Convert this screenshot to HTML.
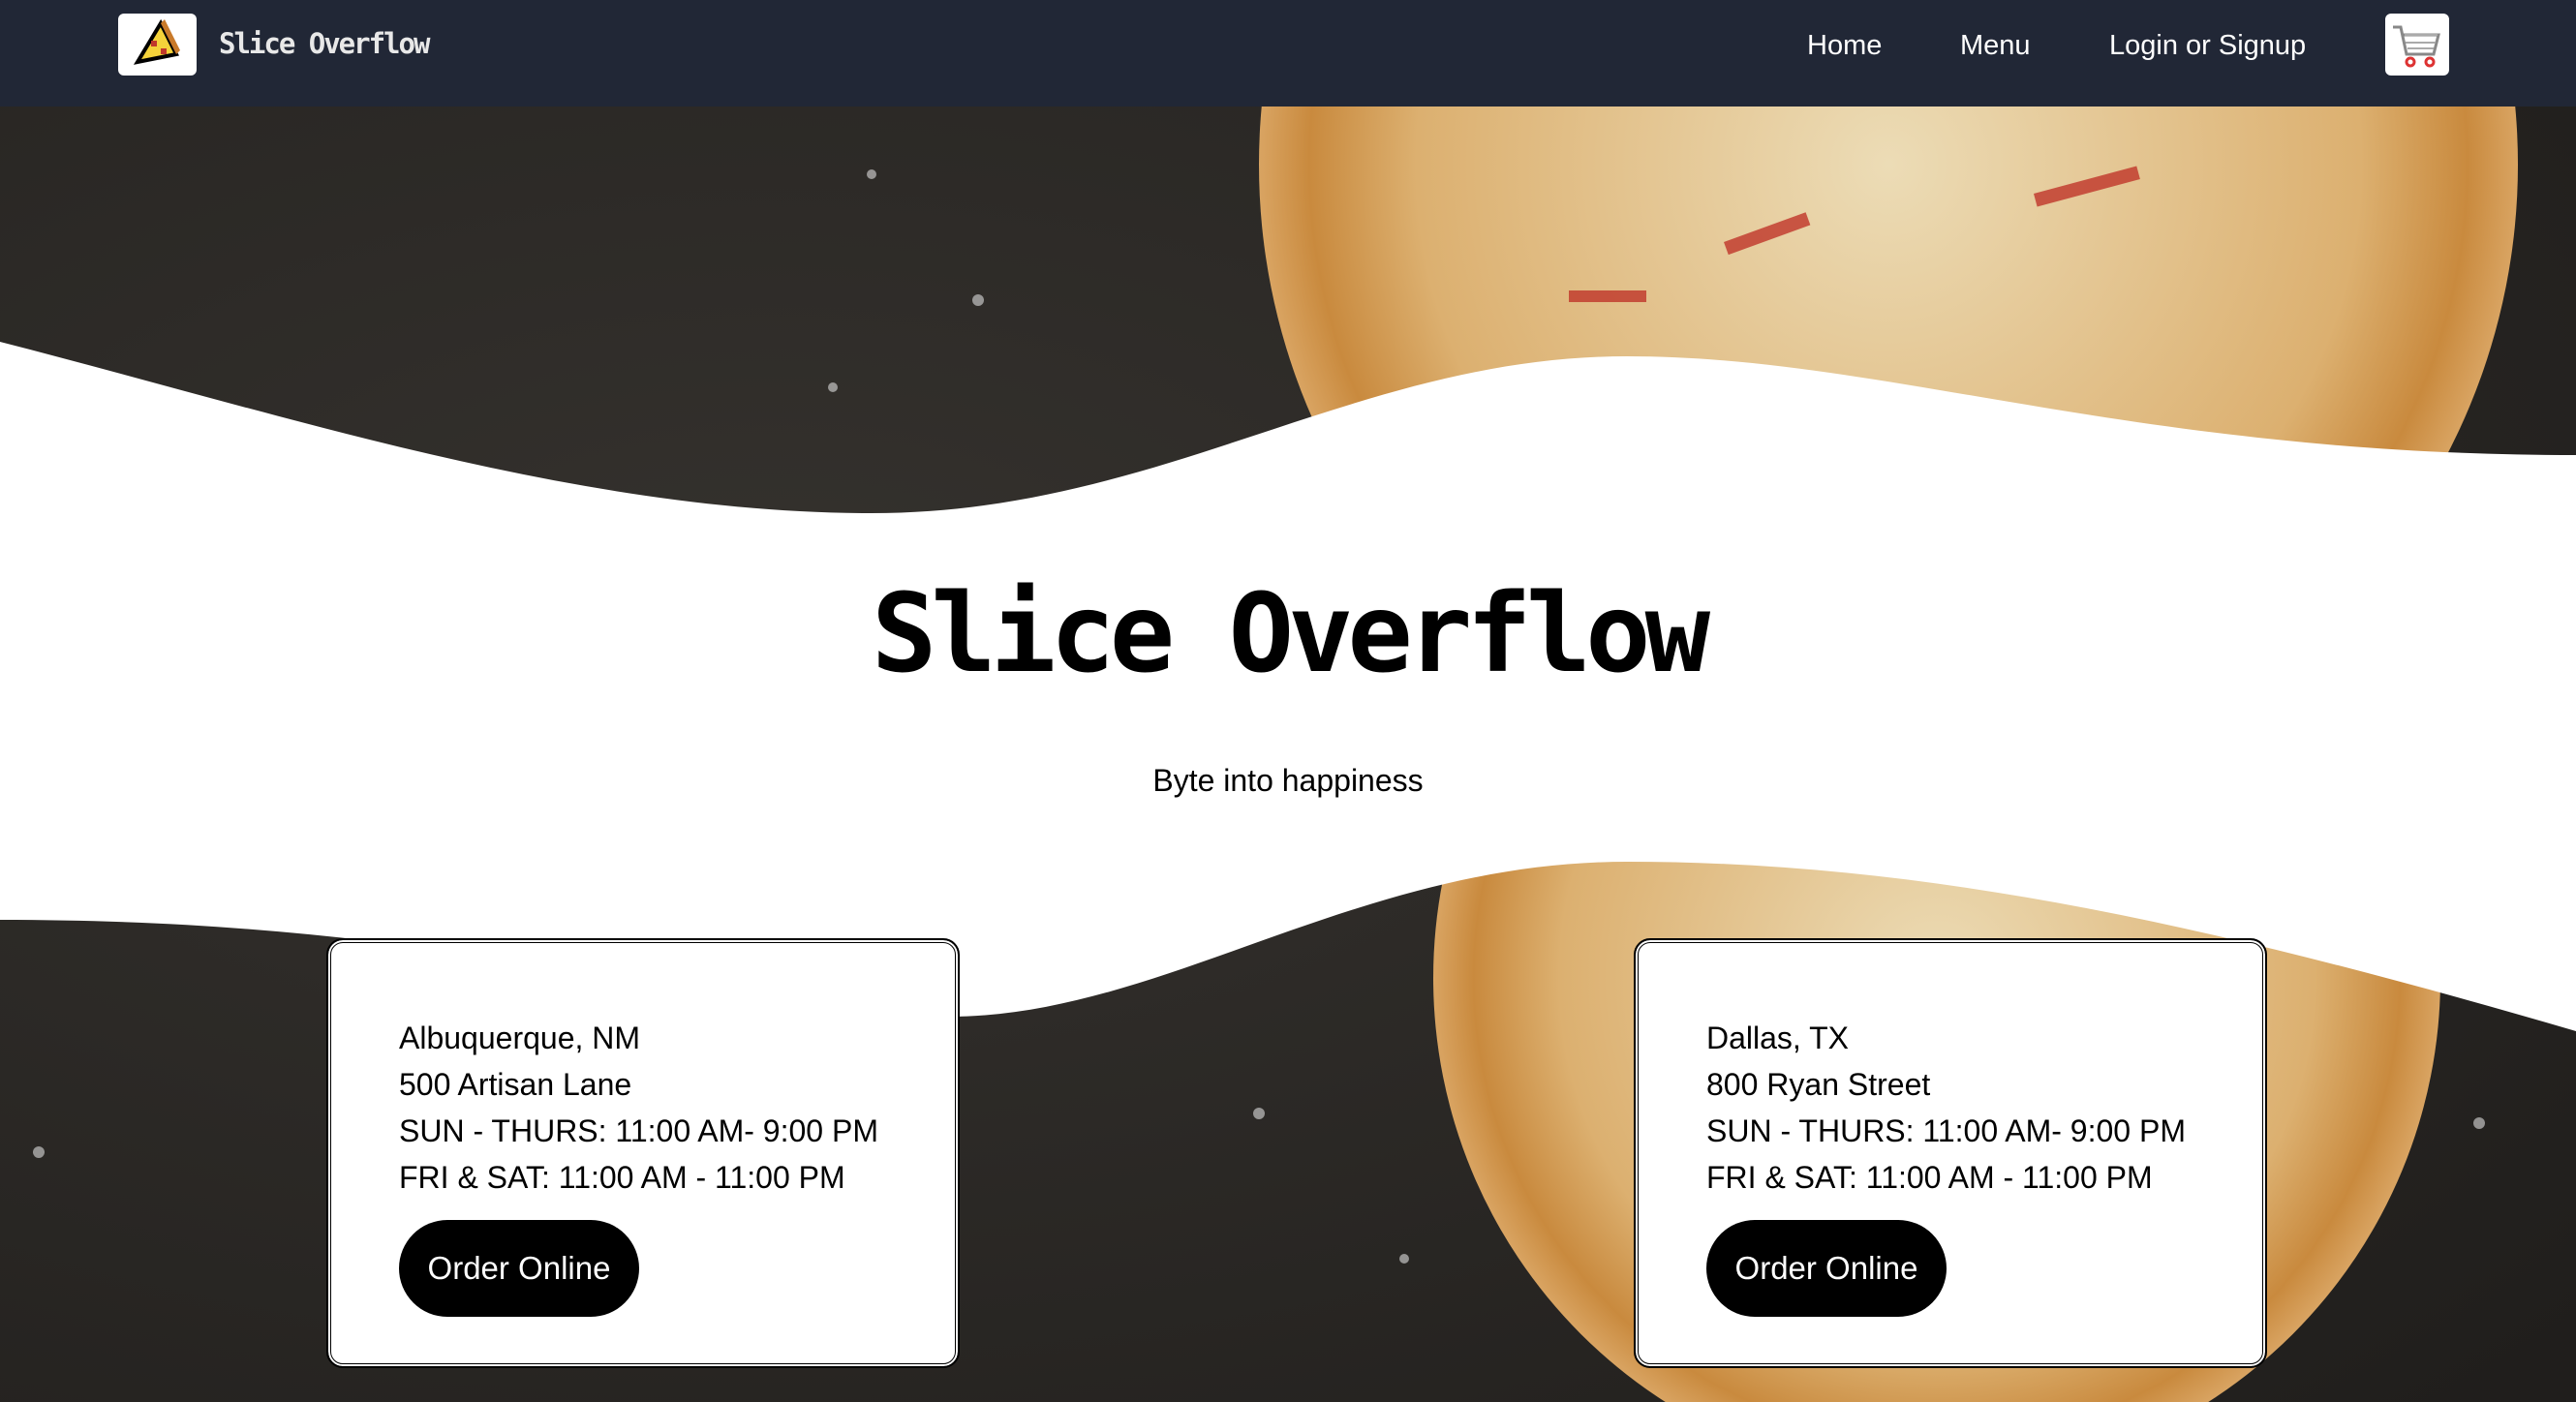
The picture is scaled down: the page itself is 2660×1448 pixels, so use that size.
<!DOCTYPE html>
<html><head><meta charset="utf-8"><style>
*{margin:0;padding:0;box-sizing:border-box}
html,body{overflow:hidden}
body{width:2660px;height:1448px;position:relative;font-family:"Liberation Sans",sans-serif;background:#fff}
nav{position:absolute;left:0;top:0;width:2660px;height:110px;background:#212736;z-index:5}
.logo{position:absolute;left:122px;top:14px;width:81px;height:64px;background:#fff;border-radius:6px}
.brand{position:absolute;left:226px;top:28px;color:#e8e8e8;font:bold 29px "DejaVu Sans Mono",monospace;letter-spacing:-2px}
.nl{position:absolute;top:31px;color:#fff;font-size:29px}
.cart{position:absolute;left:2463px;top:14px;width:66px;height:64px;background:#fff;border-radius:6px}
svg.bg{position:absolute;left:0;top:110px}
h1{position:absolute;left:0;width:2660px;top:590px;text-align:center;font:bold 112px "DejaVu Sans Mono",monospace;letter-spacing:-6px;line-height:130px}
.sub{position:absolute;left:0;width:2660px;top:788px;text-align:center;font-size:32px}
.card{position:absolute;top:970px;width:652px;height:442px;background:#fff;border:4px double #000;outline:2px solid #000;outline-offset:-1px;border-radius:16px;padding:74px 0 0 70px;font-size:32px;line-height:48px;overflow:hidden}
.btn{display:inline-block;margin-top:20px;background:#000;color:#fff;height:100px;width:248px;border-radius:50px;text-align:center;line-height:100px;font-size:33px}
</style></head><body>
<nav>
<div class="logo"><svg width="81" height="64" viewBox="0 0 81 64"><polygon points="20,50 44,10 60,42" fill="#f5d33a" stroke="#000" stroke-width="4"/><rect x="34" y="28" width="6" height="6" fill="#c0392b"/><rect x="44" y="36" width="6" height="6" fill="#c0392b"/><polygon points="44,10 60,42 64,38 48,6" fill="#c97a2a"/></svg></div>
<div class="brand">Slice Overflow</div>
<div class="nl" style="left:1866px">Home</div>
<div class="nl" style="left:2024px">Menu</div>
<div class="nl" style="left:2178px">Login or Signup</div>
<div class="cart"><svg width="66" height="64" viewBox="0 0 66 64"><path d="M8 14h8l6 28h28l5-20H18" fill="none" stroke="#888" stroke-width="3"/><path d="M20 22h34M21 30h31M23 36h27" stroke="#aaa" stroke-width="2"/><circle cx="26" cy="50" r="4" fill="none" stroke="#d33" stroke-width="3"/><circle cx="46" cy="50" r="4" fill="none" stroke="#d33" stroke-width="3"/></svg></div>
</nav>
<svg class="bg" width="2660" height="1338" viewBox="0 110 2660 1338">
<defs>
<radialGradient id="wood" cx="0.3" cy="0.4" r="0.9"><stop offset="0" stop-color="#35322e"/><stop offset="1" stop-color="#201e1c"/></radialGradient>
<radialGradient id="pz" cx="0.5" cy="0.5" r="0.5"><stop offset="0" stop-color="#ecdcb6"/><stop offset="0.75" stop-color="#dcb070"/><stop offset="0.92" stop-color="#c98a3e"/><stop offset="1" stop-color="#d9a462"/></radialGradient>
</defs>
<rect x="0" y="110" width="2660" height="1338" fill="url(#wood)"/>
<circle cx="1950" cy="170" r="650" fill="url(#pz)"/>
<circle cx="2000" cy="1010" r="520" fill="url(#pz)"/>
<g fill="#c0352a" opacity="0.8"><rect x="1780" y="250" width="90" height="14" transform="rotate(-20 1780 250)"/><rect x="2100" y="200" width="110" height="14" transform="rotate(-15 2100 200)"/><rect x="1620" y="300" width="80" height="12"/></g>
<g fill="#ddd" opacity="0.6"><circle cx="900" cy="180" r="5"/><circle cx="1010" cy="310" r="6"/><circle cx="860" cy="400" r="5"/><circle cx="1300" cy="1150" r="6"/><circle cx="1450" cy="1300" r="5"/><circle cx="2560" cy="1160" r="6"/><circle cx="40" cy="1190" r="6"/></g>
<path d="M0,353 C300,430 600,530 900,530 C1200,530 1400,368 1680,368 C1950,368 2200,470 2660,470 L2660,1065 C2300,960 2000,890 1680,890 C1400,890 1200,1050 980,1050 C700,1050 500,950 0,950 Z" fill="#fff"/>
</svg>
<h1>Slice Overflow</h1>
<div class="sub">Byte into happiness</div>
<div class="card" style="left:338px">Albuquerque, NM<br>500 Artisan Lane<br>SUN - THURS: 11:00 AM- 9:00 PM<br>FRI &amp; SAT: 11:00 AM - 11:00 PM<br><span class="btn">Order Online</span></div>
<div class="card" style="left:1688px">Dallas, TX<br>800 Ryan Street<br>SUN - THURS: 11:00 AM- 9:00 PM<br>FRI &amp; SAT: 11:00 AM - 11:00 PM<br><span class="btn">Order Online</span></div>
</body></html>
